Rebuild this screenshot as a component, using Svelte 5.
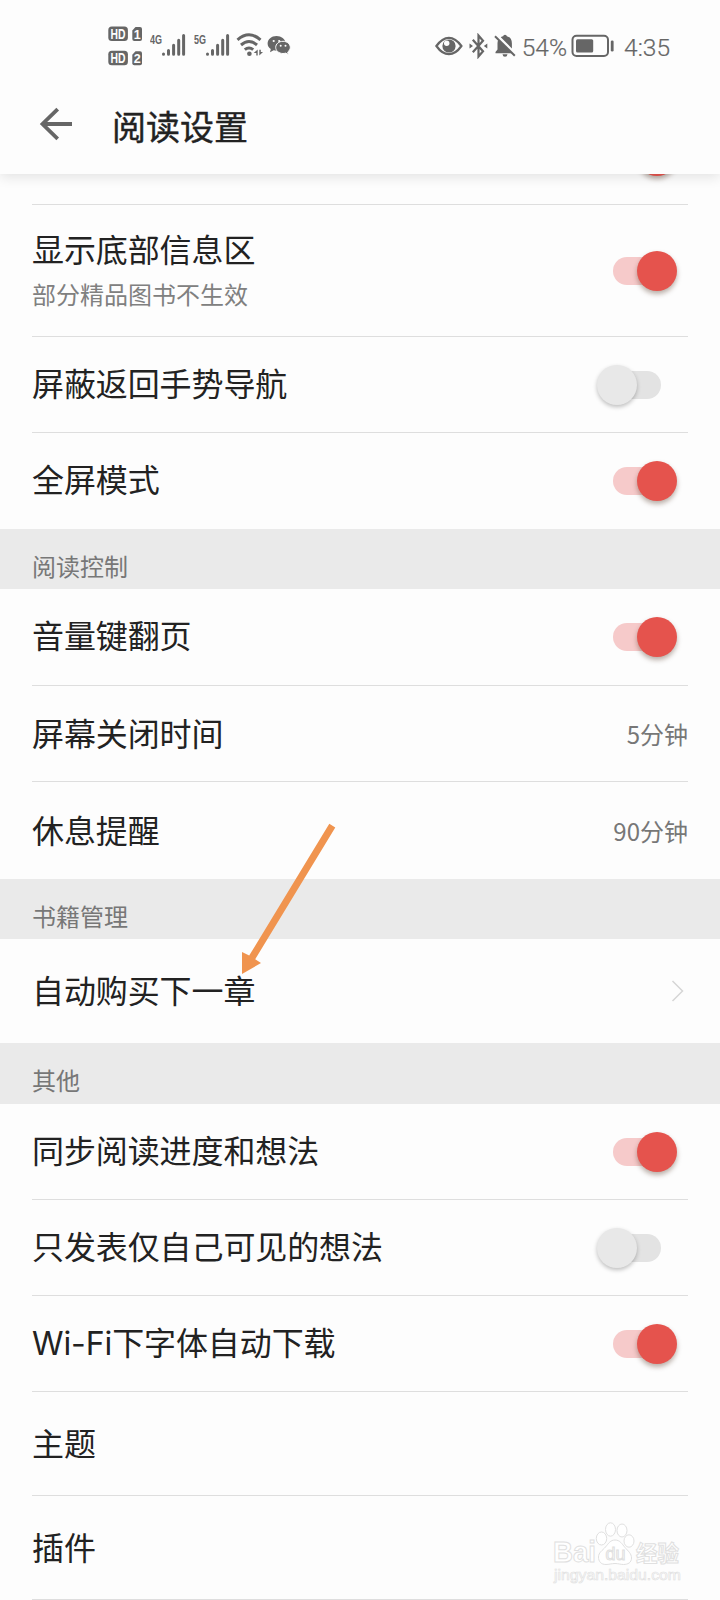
<script lang="ts">
	type Row = {
		label: string;
		note?: string;
		value?: string;
		on?: boolean;
		link?: boolean;
		height: number;
	};

	type Section = { title?: string; height?: number; rows: Row[] };

	const sections: Section[] = [
		{
			rows: [
				{ label: '', on: true, height: 97 },
				{ label: '显示底部信息区', note: '部分精品图书不生效', on: true, height: 132 },
				{ label: '屏蔽返回手势导航', on: false, height: 96 },
				{ label: '全屏模式', on: true, height: 96 }
			]
		},
		{
			title: '阅读控制',
			height: 60,
			rows: [
				{ label: '音量键翻页', on: true, height: 97 },
				{ label: '屏幕关闭时间', value: '5分钟', height: 96 },
				{ label: '休息提醒', value: '90分钟', height: 97 }
			]
		},
		{
			title: '书籍管理',
			height: 60,
			rows: [{ label: '自动购买下一章', link: true, height: 104 }]
		},
		{
			title: '其他',
			height: 61,
			rows: [
				{ label: '同步阅读进度和想法', on: true, height: 96 },
				{ label: '只发表仅自己可见的想法', on: false, height: 96 },
				{ label: 'Wi-Fi下字体自动下载', on: true, height: 96 },
				{ label: '主题', height: 104 },
				{ label: '插件', height: 104 }
			]
		}
	];
</script>

<div class="screen">
	<header>
		<div class="status">
			<svg class="hd" width="36" height="40" viewBox="0 0 36 40">
				{#each [1, 2] as sim, i}
					<g transform="translate(0 {i * 24.3})">
						<rect x="0.3" y="0.5" width="19.6" height="14.4" rx="3.500" />
						<text class="cut" x="10.1" y="12.7" font-size="13.800" text-anchor="middle" textLength="15" lengthAdjust="spacingAndGlyphs">HD</text>
						<path d="M27.5 1H32q2 0 2 2v9.9q0 2-2 2H26.300q-2 0-2-2V4.500z" />
						<text class="cut" x="29.2" y="12.600" font-size="12.500" text-anchor="middle">{sim}</text>
					</g>
				{/each}
			</svg>
			{#each ['4G', '5G'] as net}
				<svg class="signal" width="38" height="26" viewBox="0 0 38 26">
					<text x="0" y="11.500" font-size="13.500" font-weight="700" textLength="12" lengthAdjust="spacingAndGlyphs">{net}</text>
					<g stroke-width="3" stroke-linecap="round">
						<path d="M13.500 22v.3M18.500 18.500v3.800M23.600 13.300v9M28.700 8.300v14M33.600 3.500v18.800" />
					</g>
				</svg>
			{/each}
			<svg class="wifi" width="28" height="26" viewBox="0 0 28 26">
				<g class="line" stroke-width="3">
					<path d="M1.500 7.800Q13 -2.200 24.500 7.800M5 13Q13 6 21 13M8.800 17.700Q13 14.200 17.200 17.700" />
				</g>
				<circle cx="13.400" cy="21.800" r="2.300" />
				<path d="M17.700 21l4-3.600v6h-1.400v-2.400zM23.300 17.700h1.500v2.300h2.200l-3.700 3.500z" />
			</svg>
			<svg class="wechat" width="24" height="22" viewBox="0 0 24 22">
				<path d="M9.500 1C4.500 1 .6 4.300.6 8.400c0 2.400 1.300 4.300 3.200 5.700L3 17.200l3.700-1.900c1 .3 2 .4 3 .4z M9.500 1c5 0 8.600 3 8.900 6.400L9.700 15.700z" />
				<path class="bubble" d="M16 6.300c-4.200 0-7.300 2.700-7.300 6.100 0 3.300 3.100 6.100 7.300 6.100.9 0 1.800-.2 2.600-.4l2.900 1.500-.8-2.600c1.600-1.100 2.600-2.800 2.600-4.600 0-3.400-3.100-6.100-7.300-6.100z" />
				<g class="dot">
					<circle cx="6.700" cy="6" r="1.100" /><circle cx="12.200" cy="6" r="1.100" />
					<circle cx="13.700" cy="10.700" r="1" /><circle cx="18.500" cy="10.700" r="1" />
				</g>
			</svg>

			<div class="right">
				<svg width="28" height="26" viewBox="0 0 28 26">
					<path class="line" stroke-width="2.200" d="M1.400 13Q7.200 4.800 13.900 4.800T26.400 13Q20.600 21.200 13.900 21.200T1.400 13z" />
					<circle cx="14" cy="13" r="6.600" />
					<circle class="dot" cx="11.700" cy="10.300" r="2.700" />
				</svg>
				<svg class="bt" width="19" height="26" viewBox="0 0 19 26">
					<path class="line" stroke-width="2.200" d="M3.800 6.800L14 18.300 9.500 23.500V2.500L14 7.700 3.800 19.200" />
					<path d="M0.500 10.500L4 13 .5 15.500zM18.300 10.500L14.800 13l3.500 2.500z" />
				</svg>
				<svg class="bell" width="24" height="26" viewBox="0 0 24 26">
					<path d="M2.500 20.200v-1.300l2-2.300V10q0-2 1-3.500L18.700 20.200zM7.800 4.200q1.200-.8 2.300-1Q10.300 1.700 12 1.700t1.900 1.500q5 1.300 5 7.200v5zM9.500 21.300h5q-.3 2.500-2.500 2.500t-2.500-2.500z" />
					<path class="line" stroke-width="2" d="M2 3.200L21.800 22.700" />
				</svg>
				<span class="percent">54%</span>
				<svg class="battery" width="44" height="24" viewBox="0 0 44 24">
					<rect class="line" stroke-width="2" x="1.500" y="1.700" width="35.500" height="20.300" rx="4" />
					<rect x="5" y="5.200" width="17.200" height="13.300" rx="1.500" />
					<rect x="39.800" y="6.500" width="2.800" height="11" rx="1.300" />
				</svg>
				<span class="clock">4:35</span>
			</div>
		</div>

		<div class="title-bar">
			<svg width="34" height="34" viewBox="0 0 34 34">
				<path class="line" stroke-width="3.800" d="M33 17H3M18.700 2.200L3.500 17l15.200 14.800" />
			</svg>
			<h1>阅读设置</h1>
		</div>
	</header>

	<main>
		{#each sections as section}
			<section>
				{#if section.title}
					<h2 style="height: {section.height}px">{section.title}</h2>
				{/if}
				<ul>
					{#each section.rows as row}
						<li style="height: {row.height}px">
							<div class="text" class:plain={row.on === undefined}>
								<p class="label">{row.label}</p>
								{#if row.note}
									<p class="note">{row.note}</p>
								{/if}
							</div>
							{#if row.on !== undefined}
								<span class="switch" class:on={row.on}><i></i></span>
							{:else if row.value}
								<span class="value">{row.value}</span>
							{:else if row.link}
								<svg class="chevron" width="14" height="24" viewBox="0 0 14 24">
									<path d="M1.500 2L11.500 12l-10 10" />
								</svg>
							{/if}
						</li>
					{/each}
				</ul>
			</section>
		{/each}
	</main>

	<svg class="pointer" width="98" height="154" viewBox="0 0 98 154">
		<path d="M89.300 3.700l6 3.700L15.200 139.200l5.800 3.800L2 154V132l7.200 3.600z" />
	</svg>

	<svg class="watermark" width="136" height="70" viewBox="0 0 136 70">
		<text class="bold" x="1" y="42" font-size="30" textLength="43" lengthAdjust="spacingAndGlyphs">Bai</text>
		<g>
			<ellipse cx="49.500" cy="18.500" rx="5.200" ry="6.500" />
			<ellipse cx="58.500" cy="9.500" rx="5" ry="6.700" />
			<ellipse cx="70" cy="10.500" rx="5" ry="6.500" />
			<ellipse cx="77" cy="21" rx="5" ry="6.200" />
			<path d="M63 20c5 0 7 4 10 7.500s6.500 6 6.500 10.500-3.500 6.500-8 6.500c-3 0-5-1-8.500-1s-6 1-9 1c-5 0-7.500-3-7.500-7.500 0-4.500 4-6.500 7-10s5-7 9.500-7z" />
		</g>
		<text x="53.500" y="39.500" font-size="18" textLength="20" lengthAdjust="spacingAndGlyphs">du</text>
		<text class="bold" x="84" y="41" font-size="22" textLength="43" lengthAdjust="spacingAndGlyphs">经验</text>
		<text class="url" x="2" y="60" font-size="14.500" textLength="127" lengthAdjust="spacingAndGlyphs">jingyan.baidu.com</text>
	</svg>
</div>

<style>
	:global(body) { background: #fdfdfd; }

	.screen {
		position: relative; width: 720px; height: 1600px; overflow: hidden;
		background: #fdfdfd; color: #222;
		font-family: 'Noto Sans CJK SC', 'Noto Sans', sans-serif;
	}
	svg { display: block; flex-shrink: 0; }
	h1, h2, p, ul { margin: 0; padding: 0; font-weight: 400; }

	header {
		position: relative; z-index: 1; height: 174px;
		background: #fdfdfd; box-shadow: 0 3px 12px rgba(0, 0, 0, 0.11);
	}

	.status {
		display: flex; align-items: flex-start; box-sizing: border-box;
		height: 80px; padding: 26px 50px 0 108px;
		font-family: Roboto, sans-serif; color: #666; fill: #666;
	}
	.status text { font-family: 'Liberation Sans', sans-serif; font-weight: 700; }
	.status .cut { fill: #fdfdfd; }
	.status .signal { margin: 6px 0 0 6px; }
	.signal g { stroke: #666; }
	.wifi { margin: 6px 0 0 4px; }
	.wechat { margin: 9px 0 0 3px; }
	.bubble { stroke: #fdfdfd; stroke-width: 1; }
	.dot { fill: #fdfdfd; }
	.line { fill: none; stroke: #666; }

	.right { display: flex; align-items: center; height: 40px; margin-left: auto; }
	.bt { margin-left: 6px; }
	.bell { margin-left: 5px; }
	.percent, .clock {
		padding-top: 3px; font-size: 24.5px; line-height: 40px; font-weight: 300; white-space: nowrap;
		-webkit-text-stroke: 0.2px #666;
	}
	.percent { margin-left: 5px; }
	.battery { margin-left: 4px; }
	.clock { margin-left: 9px; }

	.title-bar { display: flex; align-items: center; height: 88px; padding-left: 39px; }
	.title-bar h1 {
		margin-left: 39px; padding-top: 3px; font-size: 34px; line-height: 50px;
		-webkit-text-stroke: 0.4px #222;
	}

	/* the list is scrolled part of the way under the header */
	main { margin-top: -66px; }

	h2 {
		box-sizing: border-box; padding: 19px 32px 0; background: #eaeaea;
		color: #777; font-size: 24px; line-height: 36px;
	}
	ul { list-style: none; }
	li {
		display: flex; align-items: center; justify-content: space-between;
		box-sizing: border-box; margin: 0 32px; border-bottom: 1px solid #dedede;
	}
	section:not(:last-child) li:last-child { border-bottom-color: transparent; }

	.plain { padding-top: 3px; }
	.label {
		font-family: Inter, 'Noto Sans CJK SC', sans-serif;
		font-size: 32px; line-height: 46px; letter-spacing: -0.1px; white-space: nowrap;
	}
	.note { margin: 2px 0 2px; color: #808080; font-size: 24px; line-height: 36px; }
	.value { padding-top: 1px; color: #777; font-size: 24px; line-height: 36px; }

	.switch {
		display: flex; align-items: center; width: 48px; height: 28px;
		margin-right: 27px; border-radius: 14px; background: #e3e3e3;
	}
	.switch i {
		flex-shrink: 0; width: 40px; height: 40px; margin-left: -16px; border-radius: 50%;
		background: #e8e8e8; box-shadow: 0 2px 4px rgba(0, 0, 0, 0.25);
	}
	.switch.on { background: #f6caca; }
	.switch.on i { margin-left: 24px; background: #e5534d; box-shadow: 0 3px 5px rgba(60, 30, 10, 0.35); }

	.chevron { margin-right: 3px; fill: none; stroke: #d6d6d6; stroke-width: 1.5; }

	.pointer { position: absolute; left: 240px; top: 820px; fill: #f0944f; }

	.watermark {
		position: absolute; left: 552px; top: 1520px;
		fill: #fff; stroke: #e0e0e0; stroke-width: 1;
	}
	.watermark text { font-family: 'Liberation Sans', 'Noto Sans CJK SC', sans-serif; }
	.watermark .bold { font-weight: 700; }
	.watermark .url { stroke-width: 0.6; }
</style>
